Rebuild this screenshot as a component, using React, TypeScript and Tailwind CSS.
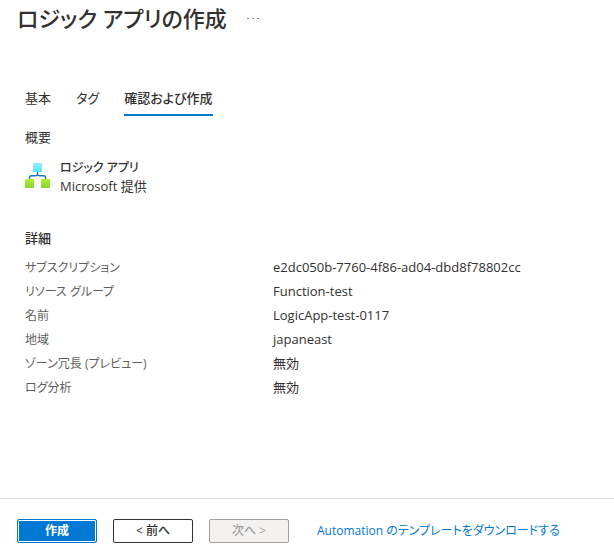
import React from "react";

const tabs = ["基本", "タグ", "確認および作成"];

const details: [string, string][] = [
  ["サブスクリプション", "e2dc050b-7760-4f86-ad04-dbd8f78802cc"],
  ["リソース グループ", "Function-test"],
  ["名前", "LogicApp-test-0117"],
  ["地域", "japaneast"],
  ["ゾーン冗長 (プレビュー)", "無効"],
  ["ログ分析", "無効"],
];

function LogicAppIcon() {
  return (
    <svg width="26" height="28" viewBox="0 0 26 28" aria-hidden="true" className="shrink-0">
      <defs>
        <linearGradient id="blue" x1="0" y1="0" x2="0" y2="1">
          <stop offset="0" stopColor="#9cebff" />
          <stop offset="1" stopColor="#50e6ff" />
        </linearGradient>
        <linearGradient id="green" x1="0" y1="0" x2="0" y2="1">
          <stop offset="0" stopColor="#b4ec36" />
          <stop offset="1" stopColor="#86d633" />
        </linearGradient>
      </defs>
      <path
        d="M12.5 10v2c0 1-.8 1.700-1.800 1.700H6.500c-1.300 0-2 .7-2 1.800V18M12.500 12c0 1 .8 1.700 1.800 1.700h4.200c1.300 0 2 .7 2 1.800V18"
        fill="none"
        stroke="#1b72bd"
        strokeWidth="1.4"
      />
      <rect x="8" y="1" width="9" height="9" rx="0.5" fill="url(#blue)" />
      <rect x="0" y="17" width="9" height="9" rx="0.5" fill="url(#green)" />
      <rect x="16" y="17" width="9" height="9" rx="0.5" fill="url(#green)" />
    </svg>
  );
}

export default function App() {
  return (
    <div className="flex min-h-screen flex-col bg-white font-['Open_Sans','Noto_Sans_CJK_JP',sans-serif] text-[13px] leading-[18px] text-[#323130] [font-feature-settings:'palt']">
      <header className="flex h-9 items-center gap-4 px-[17px]">
        <h1 className="text-[22px] leading-9 font-medium">ロジック アプリの作成</h1>
        <button type="button" aria-label="その他" className="flex items-center gap-[3px] p-1">
          <span className="h-px w-0.5 bg-[#8a8886]" />
          <span className="h-px w-0.5 bg-[#8a8886]" />
          <span className="h-px w-0.5 bg-[#8a8886]" />
        </button>
      </header>

      <main className="flex flex-1 flex-col px-[25px] pt-[52px]">
        <nav role="tablist" className="flex gap-[25px]">
          {tabs.map((tab, i) => (
            <button
              key={tab}
              type="button"
              role="tab"
              aria-selected={i === 2}
              className={
                i === 2
                  ? "h-7 border-b-2 border-[#0078d4] pb-1.5 font-medium"
                  : "h-7 border-b-2 border-transparent pb-1.5"
              }
            >
              {tab}
            </button>
          ))}
        </nav>

        <h2 className="mt-3">概要</h2>
        <div className="mt-3 flex items-start gap-[9px] pt-1">
          <LogicAppIcon />
          <div className="-mt-1 pt-px">
            <p className="text-xs leading-[18px] font-medium">ロジック アプリ</p>
            <p>Microsoft 提供</p>
          </div>
        </div>

        <h2 className="mt-[34px] font-medium">詳細</h2>
        <table className="mt-2 w-full table-fixed border-collapse text-left">
          <tbody>
            {details.map(([label, value]) => (
              <tr key={label} className="h-6">
                <th scope="row" className="w-[248px] p-0 pt-0.5 text-xs leading-[18px] font-normal text-[#605e5c]">
                  {label}
                </th>
                <td className="p-0">{value}</td>
              </tr>
            ))}
          </tbody>
        </table>
      </main>

      <footer className="flex items-start gap-4 border-t border-[#dcdbda] px-[17px] pt-5 pb-[7px] text-xs">
        <button
          type="button"
          className="h-6 w-20 rounded-xs border border-[#0078d4] bg-[#0078d4] font-semibold text-white outline -outline-offset-2 outline-white"
        >
          作成
        </button>
        <button type="button" className="h-6 w-20 rounded-xs border border-[#323130] bg-white font-medium">
          &lt; 前へ
        </button>
        <button
          type="button"
          disabled
          className="h-6 w-20 rounded-xs border border-[#a19f9d] bg-[#f3f2f1] font-medium text-[#a19f9d]"
        >
          次へ &gt;
        </button>
        <a href="#template" className="ml-3 leading-6 text-[#0078d4]">
          Automation のテンプレートをダウンロードする
        </a>
      </footer>
    </div>
  );
}
